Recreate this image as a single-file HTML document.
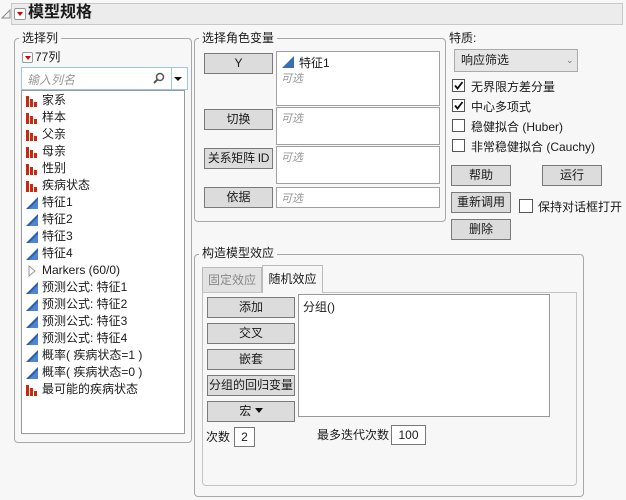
<!DOCTYPE html>
<html><head><meta charset="utf-8">
<style>
*{box-sizing:border-box;margin:0;padding:0}
body{width:626px;height:500px;background:#f7f7f7;font-family:"Liberation Sans","Noto Sans CJK SC",sans-serif;font-size:12px;color:#1a1a1a;position:relative;overflow:hidden}
.a{position:absolute}
.grp{position:absolute;border:1px solid #a8a8a8;border-radius:4px}
.lg{position:absolute;background:#f7f7f7;padding:0 3px;font-size:12px;line-height:14px}
.btn{position:absolute;background:#dcdcdc;border:1px solid #7a7a7a;text-align:center;line-height:18px;font-size:12px}
.box{position:absolute;background:#fff;border:1px solid #a0a0a0}
.opt{color:#999;font-style:italic;font-size:11px;position:absolute;left:4px;top:2px}
.red{display:inline-block;width:11px;height:11px;border:1px solid #999;border-radius:2px;background:#fff;position:absolute}
.red:after{content:"";position:absolute;left:2px;top:3px;border-left:3px solid transparent;border-right:3px solid transparent;border-top:4px solid #d00}
.it{position:absolute;left:20px;height:17px;line-height:17px;white-space:nowrap}
.it svg{position:absolute;left:-16px;top:3px}
.cb{position:absolute;width:13px;height:13px;border:1px solid #555;background:#fff}
.ct{position:absolute;white-space:nowrap}
</style></head><body>
<!-- header -->
<svg class="a" style="left:1px;top:9px" width="10" height="10"><path d="M1 9 L9 1 L9 9 Z" fill="none" stroke="#888" stroke-width="1"/></svg>
<div class="a" style="left:11px;top:3px;width:612px;height:22px;background:#ececec;border:1px solid #c8c8c8"></div>
<span class="red" style="left:14px;top:8px;width:12px;height:12px"></span>
<div class="a" style="left:28px;top:3px;font-size:16px;font-weight:bold;line-height:20px">模型规格</div>

<!-- 选择列 -->
<div class="grp" style="left:14px;top:38px;width:178px;height:405px"></div>
<div class="lg" style="left:19px;top:31px">选择列</div>
<span class="red" style="left:22px;top:52px"></span>
<div class="a" style="left:35px;top:50px;line-height:14px">77列</div>
<div class="box" style="left:21px;top:67px;width:167px;height:23px;border-color:#9cc7e6"></div>
<div class="a" style="left:27px;top:71px;color:#999;font-style:italic">输入列名</div>
<svg class="a" style="left:153px;top:72px" width="12" height="12"><circle cx="7" cy="5" r="3.5" fill="none" stroke="#555" stroke-width="1.5"/><path d="M4.5 7.5 L1 11" stroke="#555" stroke-width="2"/></svg>
<div class="a" style="left:171px;top:68px;width:1px;height:21px;background:#9cc7e6"></div>
<div class="a" style="left:174px;top:77px;border-left:4px solid transparent;border-right:4px solid transparent;border-top:4px solid #111"></div>
<div class="box" style="left:21px;top:90px;width:164px;height:344px;border-color:#999">
<svg width="0" height="0" style="position:absolute"><defs>
<g id="bar"><rect x="0" y="1" width="3" height="11" fill="#c8290f"/><rect x="4" y="4" width="3" height="8" fill="#c8290f"/><rect x="8" y="7" width="3" height="5" fill="#c8290f"/></g>
<g id="tri"><path d="M0 12 L12 0 L12 12 Z" fill="#2e5fa8"/><path d="M3 12 L12 3 L12 12 Z" fill="#4f86d4"/></g>
</defs></svg>
<div class="it" style="top:1px"><svg width="12" height="12"><use href="#bar"/></svg>家系</div>
<div class="it" style="top:18px"><svg width="12" height="12"><use href="#bar"/></svg>样本</div>
<div class="it" style="top:35px"><svg width="12" height="12"><use href="#bar"/></svg>父亲</div>
<div class="it" style="top:52px"><svg width="12" height="12"><use href="#bar"/></svg>母亲</div>
<div class="it" style="top:69px"><svg width="12" height="12"><use href="#bar"/></svg>性别</div>
<div class="it" style="top:86px"><svg width="12" height="12"><use href="#bar"/></svg>疾病状态</div>
<div class="it" style="top:103px"><svg width="12" height="12"><use href="#tri"/></svg>特征1</div>
<div class="it" style="top:120px"><svg width="12" height="12"><use href="#tri"/></svg>特征2</div>
<div class="it" style="top:137px"><svg width="12" height="12"><use href="#tri"/></svg>特征3</div>
<div class="it" style="top:154px"><svg width="12" height="12"><use href="#tri"/></svg>特征4</div>
<div class="it" style="top:171px"><svg width="12" height="12"><path d="M3 1 L9 6 L3 11 Z" fill="#fff" stroke="#999"/></svg>Markers (60/0)</div>
<div class="it" style="top:188px"><svg width="12" height="12"><use href="#tri"/></svg>预测公式: 特征1</div>
<div class="it" style="top:205px"><svg width="12" height="12"><use href="#tri"/></svg>预测公式: 特征2</div>
<div class="it" style="top:222px"><svg width="12" height="12"><use href="#tri"/></svg>预测公式: 特征3</div>
<div class="it" style="top:239px"><svg width="12" height="12"><use href="#tri"/></svg>预测公式: 特征4</div>
<div class="it" style="top:256px"><svg width="12" height="12"><use href="#tri"/></svg>概率( 疾病状态=1 )</div>
<div class="it" style="top:273px"><svg width="12" height="12"><use href="#tri"/></svg>概率( 疾病状态=0 )</div>
<div class="it" style="top:290px"><svg width="12" height="12"><use href="#bar"/></svg>最可能的疾病状态</div>
</div>

<!-- 选择角色变量 -->
<div class="grp" style="left:194px;top:38px;width:252px;height:184px"></div>
<div class="lg" style="left:199px;top:31px">选择角色变量</div>
<div class="btn" style="left:204px;top:53px;width:69px;height:21px">Y</div>
<div class="btn" style="left:204px;top:109px;width:69px;height:21px">切换</div>
<div class="btn" style="left:204px;top:148px;width:69px;height:21px;white-space:nowrap;letter-spacing:-0.3px">关系矩阵 ID</div>
<div class="btn" style="left:204px;top:187px;width:69px;height:21px">依据</div>
<div class="box" style="left:276px;top:51px;width:164px;height:55px">
<svg class="a" style="left:5px;top:4px" width="12" height="12"><path d="M0 12 L12 0 L12 12 Z" fill="#3a6cb8"/></svg>
<div class="a" style="left:22px;top:2px">特征1</div>
<div class="opt" style="top:18px">可选</div></div>
<div class="box" style="left:276px;top:107px;width:164px;height:38px"><div class="opt">可选</div></div>
<div class="box" style="left:276px;top:146px;width:164px;height:38px"><div class="opt">可选</div></div>
<div class="box" style="left:276px;top:187px;width:164px;height:21px"><div class="opt">可选</div></div>

<!-- 特质 -->
<div class="a" style="left:449px;top:29px">特质:</div>
<div class="a" style="left:454px;top:49px;width:124px;height:23px;background:#e6e6e6;border:1px solid #aaa;line-height:21px;padding-left:6px">响应筛选</div>
<div class="a" style="left:566px;top:55px;color:#777;font-size:9px">⌄</div>
<div class="cb" style="left:452px;top:79px"><svg width="11" height="11"><path d="M2 5.5 L4.5 8.5 L9.5 2" fill="none" stroke="#111" stroke-width="1.8"/></svg></div>
<div class="ct" style="left:471px;top:78px">无界限方差分量</div>
<div class="cb" style="left:452px;top:99px"><svg width="11" height="11"><path d="M2 5.5 L4.5 8.5 L9.5 2" fill="none" stroke="#111" stroke-width="1.8"/></svg></div>
<div class="ct" style="left:471px;top:98px">中心多项式</div>
<div class="cb" style="left:452px;top:119px"></div>
<div class="ct" style="left:471px;top:118px">稳健拟合 (Huber)</div>
<div class="cb" style="left:452px;top:139px"></div>
<div class="ct" style="left:471px;top:138px">非常稳健拟合 (Cauchy)</div>
<div class="btn" style="left:451px;top:165px;width:60px;height:21px">帮助</div>
<div class="btn" style="left:542px;top:165px;width:60px;height:21px">运行</div>
<div class="btn" style="left:451px;top:192px;width:60px;height:21px">重新调用</div>
<div class="cb" style="left:519px;top:199px;width:14px;height:14px"></div>
<div class="ct" style="left:538px;top:198px">保持对话框打开</div>
<div class="btn" style="left:451px;top:219px;width:60px;height:21px">删除</div>

<!-- 构造模型效应 -->
<div class="grp" style="left:194px;top:254px;width:390px;height:243px"></div>
<div class="lg" style="left:199px;top:246px">构造模型效应</div>
<div class="a" style="left:202px;top:267px;width:60px;height:26px;background:#e2e2e2;border:1px solid #bbb;border-bottom:none;color:#888;line-height:24px;text-align:center">固定效应</div>
<div class="a" style="left:202px;top:292px;width:375px;height:194px;border:1px solid #c4c4c4;border-radius:0 0 4px 4px"></div>
<div class="a" style="left:262px;top:265px;width:61px;height:28px;background:#f7f7f7;border:1px solid #bbb;border-bottom:none;line-height:26px;text-align:center">随机效应</div>
<div class="btn" style="left:207px;top:297px;width:88px;height:21px">添加</div>
<div class="btn" style="left:207px;top:323px;width:88px;height:21px">交叉</div>
<div class="btn" style="left:207px;top:349px;width:88px;height:21px">嵌套</div>
<div class="btn" style="left:207px;top:375px;width:88px;height:21px;white-space:nowrap">分组的回归变量</div>
<div class="btn" style="left:207px;top:401px;width:88px;height:21px">宏 <span style="display:inline-block;border-left:4px solid transparent;border-right:4px solid transparent;border-top:5px solid #111;vertical-align:2px"></span></div>
<div class="box" style="left:298px;top:294px;width:252px;height:123px;border-color:#999"><div class="a" style="left:4px;top:3px">分组()</div></div>
<div class="ct" style="left:206px;top:428px">次数</div>
<div class="box" style="left:234px;top:427px;width:21px;height:20px;border-color:#777;text-align:center;line-height:18px">2</div>
<div class="ct" style="left:317px;top:426px">最多迭代次数</div>
<div class="box" style="left:391px;top:425px;width:35px;height:20px;border-color:#777;text-align:center;line-height:18px">100</div>
</body></html>
